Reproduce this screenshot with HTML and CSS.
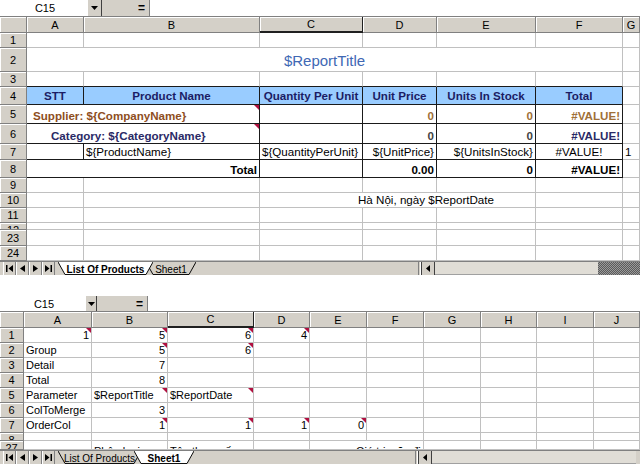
FILE: index.html
```html
<!DOCTYPE html>
<html lang="en">
<head>
    <meta charset="UTF-8">
    <title>Report Template</title>
    <link rel="stylesheet" href="styles.css">
</head>
<body>
<div class="screen">

    <!-- top window: List Of Products -->
    <section class="pane top">
        <div class="fbar">
            <div class="namebox">C15</div>
            <div class="dd"><svg width="7" height="4" viewBox="0 0 7 4"><path d="M0 0h7L3.5 4z" fill="#000"/></svg></div>
            <div class="eq">=</div>
            <div class="fx"></div>
        </div>

        <div class="row hdr">
            <div class="ch"></div><div class="ch">A</div><div class="ch">B</div><div class="ch sel">C</div><div class="ch">D</div><div class="ch">E</div><div class="ch">F</div><div class="ch">G</div>
        </div>
        <div class="row h15">
            <div class="rh">1</div><div class="c"></div><div class="c"></div><div class="c"></div><div class="c"></div><div class="c"></div><div class="c"></div><div class="c"></div>
        </div>
        <div class="row h24">
            <div class="rh">2</div><div class="c span6 title">$ReportTitle</div><div class="c"></div>
        </div>
        <div class="row h15">
            <div class="rh">3</div><div class="c bbot"></div><div class="c bbot"></div><div class="c bbot"></div><div class="c bbot"></div><div class="c bbot"></div><div class="c bbot"></div><div class="c"></div>
        </div>
        <div class="row h18">
            <div class="rh">4</div>
            <div class="c bx th">STT</div>
            <div class="c bx th">Product Name</div>
            <div class="c bx th">Quantity Per Unit</div>
            <div class="c bx th">Unit Price</div>
            <div class="c bx th">Units In Stock</div>
            <div class="c bx th">Total</div>
            <div class="c"></div>
        </div>
        <div class="row h19">
            <div class="rh">5</div>
            <div class="c bx span2 sup cm">Supplier: ${CompanyName}</div>
            <div class="c bx"></div>
            <div class="c bx r sup-num">0</div>
            <div class="c bx r sup-num">0</div>
            <div class="c bx r sup-num">#VALUE!</div>
            <div class="c"></div>
        </div>
        <div class="row h20">
            <div class="rh">6</div>
            <div class="c bx span2 cat cm">Category: ${CategoryName}</div>
            <div class="c bx"></div>
            <div class="c bx r cat-num">0</div>
            <div class="c bx r cat-num">0</div>
            <div class="c bx r cat">#VALUE!</div>
            <div class="c"></div>
        </div>
        <div class="row h16">
            <div class="rh">7</div>
            <div class="c bx"></div>
            <div class="c bx">${ProductName}</div>
            <div class="c bx">${QuantityPerUnit}</div>
            <div class="c bx r">${UnitPrice}</div>
            <div class="c bx r">${UnitsInStock}</div>
            <div class="c bx ctr">#VALUE!</div>
            <div class="c">1</div>
        </div>
        <div class="row h18">
            <div class="rh">8</div>
            <div class="c bx span2 r strong">Total</div>
            <div class="c bx"></div>
            <div class="c bx r strong">0.00</div>
            <div class="c bx r strong">0</div>
            <div class="c bx r strong">#VALUE!</div>
            <div class="c"></div>
        </div>
        <div class="row h15">
            <div class="rh">9</div><div class="c"></div><div class="c"></div><div class="c"></div><div class="c"></div><div class="c"></div><div class="c"></div><div class="c"></div>
        </div>
        <div class="row h15">
            <div class="rh">10</div><div class="c"></div><div class="c"></div><div class="c span3 place">Hà Nội, ngày $ReportDate</div><div class="c"></div><div class="c"></div>
        </div>
        <div class="row h15">
            <div class="rh">11</div><div class="c"></div><div class="c"></div><div class="c"></div><div class="c"></div><div class="c"></div><div class="c"></div><div class="c"></div>
        </div>
        <div class="row h7 cut">
            <div class="rh"><span class="clip">12</span></div><div class="c"></div><div class="c"></div><div class="c"></div><div class="c"></div><div class="c"></div><div class="c"></div><div class="c"></div>
        </div>
        <div class="row h16">
            <div class="rh">23</div><div class="c"></div><div class="c"></div><div class="c"></div><div class="c"></div><div class="c"></div><div class="c"></div><div class="c"></div>
        </div>
        <div class="row h15">
            <div class="rh">24</div><div class="c"></div><div class="c"></div><div class="c"></div><div class="c"></div><div class="c"></div><div class="c"></div><div class="c"></div>
        </div>

        <div class="tabbar">
            <div class="navs">
                <span class="nav"><svg width="7" height="7" viewBox="0 0 7 7"><path d="M0 0h1.5v7H0zM7 0v7L2.5 3.5z" fill="#000"/></svg></span>
                <span class="nav"><svg width="5" height="7" viewBox="0 0 5 7"><path d="M5 0v7L0 3.5z" fill="#000"/></svg></span>
                <span class="nav"><svg width="5" height="7" viewBox="0 0 5 7"><path d="M0 0v7l5-3.5z" fill="#000"/></svg></span>
                <span class="nav"><svg width="7" height="7" viewBox="0 0 7 7"><path d="M0 0v7l4.5-3.5zM5.5 0H7v7H5.5z" fill="#000"/></svg></span>
            </div>
            <div class="tabs">
                <div class="tab active w95">
                    <svg class="shape" viewBox="0 0 95 14" preserveAspectRatio="none"><path d="M0 0H95L88 13.5H7Z" fill="#fff"/><path d="M0 0L7 13.5H88L95 0" fill="none" stroke="#000"/></svg>
                    <span>List Of Products</span>
                </div>
                <div class="tab w50">
                    <svg class="shape" viewBox="0 0 50 14" preserveAspectRatio="none"><path d="M0 0H50L43 13.5H7Z" fill="#d4d0c8"/><path d="M0 0L7 13.5H43L50 0" fill="none" stroke="#000"/></svg>
                    <span>Sheet1</span>
                </div>
            </div>
            <div class="gap"></div>
            <div class="split"></div>
            <div class="sbtn"><svg width="4" height="7" viewBox="0 0 4 7"><path d="M4 0v7L0 3.5z" fill="#000"/></svg></div>
            <div class="track"></div>
            <div class="dither"></div>
        </div>
    </section>

    <!-- bottom window: Sheet1 -->
    <section class="pane bottom">
        <div class="fbar small">
            <div class="namebox">C15</div>
            <div class="dd"><svg width="7" height="4" viewBox="0 0 7 4"><path d="M0 0h7L3.5 4z" fill="#000"/></svg></div>
            <div class="eq">=</div>
            <div class="fx"></div>
        </div>

        <div class="row hdr">
            <div class="ch"></div><div class="ch">A</div><div class="ch">B</div><div class="ch sel">C</div><div class="ch">D</div><div class="ch">E</div><div class="ch">F</div><div class="ch">G</div><div class="ch">H</div><div class="ch">I</div><div class="ch">J</div>
        </div>
        <div class="row h15">
            <div class="rh">1</div><div class="c r cm">1</div><div class="c r cm">5</div><div class="c r cm">6</div><div class="c r cm">4</div><div class="c"></div><div class="c"></div><div class="c"></div><div class="c"></div><div class="c"></div><div class="c"></div>
        </div>
        <div class="row h15">
            <div class="rh">2</div><div class="c">Group</div><div class="c r cm">5</div><div class="c r cm">6</div><div class="c"></div><div class="c"></div><div class="c"></div><div class="c"></div><div class="c"></div><div class="c"></div><div class="c"></div>
        </div>
        <div class="row h15">
            <div class="rh">3</div><div class="c">Detail</div><div class="c r">7</div><div class="c"></div><div class="c"></div><div class="c"></div><div class="c"></div><div class="c"></div><div class="c"></div><div class="c"></div><div class="c"></div>
        </div>
        <div class="row h15">
            <div class="rh">4</div><div class="c">Total</div><div class="c r">8</div><div class="c"></div><div class="c"></div><div class="c"></div><div class="c"></div><div class="c"></div><div class="c"></div><div class="c"></div><div class="c"></div>
        </div>
        <div class="row h15">
            <div class="rh">5</div><div class="c">Parameter</div><div class="c cm">$ReportTitle</div><div class="c cm">$ReportDate</div><div class="c"></div><div class="c"></div><div class="c"></div><div class="c"></div><div class="c"></div><div class="c"></div><div class="c"></div>
        </div>
        <div class="row h15">
            <div class="rh">6</div><div class="c">ColToMerge</div><div class="c r">3</div><div class="c"></div><div class="c"></div><div class="c"></div><div class="c"></div><div class="c"></div><div class="c"></div><div class="c"></div><div class="c"></div>
        </div>
        <div class="row h15">
            <div class="rh">7</div><div class="c">OrderCol</div><div class="c r cm">1</div><div class="c r cm">1</div><div class="c r cm">1</div><div class="c r cm">0</div><div class="c"></div><div class="c"></div><div class="c"></div><div class="c"></div><div class="c"></div>
        </div>
        <div class="row h8 cut">
            <div class="rh"><span class="clip">8</span></div><div class="c"></div><div class="c"></div><div class="c"></div><div class="c"></div><div class="c"></div><div class="c"></div><div class="c"></div><div class="c"></div><div class="c"></div><div class="c"></div>
        </div>
        <div class="row h9 cut peek">
            <div class="rh"><span class="clip">27</span></div><div class="c"></div><div class="c">Phân loại</div><div class="c">Tên tham số</div><div class="c"></div><div class="c span2 far">Giá trị mặc định</div><div class="c"></div><div class="c"></div><div class="c"></div><div class="c"></div>
        </div>

        <div class="tabbar">
            <div class="navs">
                <span class="nav"><svg width="7" height="7" viewBox="0 0 7 7"><path d="M0 0h1.5v7H0zM7 0v7L2.5 3.5z" fill="#000"/></svg></span>
                <span class="nav"><svg width="5" height="7" viewBox="0 0 5 7"><path d="M5 0v7L0 3.5z" fill="#000"/></svg></span>
                <span class="nav"><svg width="5" height="7" viewBox="0 0 5 7"><path d="M0 0v7l5-3.5z" fill="#000"/></svg></span>
                <span class="nav"><svg width="7" height="7" viewBox="0 0 7 7"><path d="M0 0v7l4.5-3.5zM5.5 0H7v7H5.5z" fill="#000"/></svg></span>
            </div>
            <div class="tabs">
                <div class="tab w83">
                    <svg class="shape" viewBox="0 0 83 14" preserveAspectRatio="none"><path d="M0 0H83L76 13.5H7Z" fill="#d4d0c8"/><path d="M0 0L7 13.5H76L83 0" fill="none" stroke="#000"/></svg>
                    <span>List Of Products</span>
                </div>
                <div class="tab active w60">
                    <svg class="shape" viewBox="0 0 60 14" preserveAspectRatio="none"><path d="M0 0H60L53 13.5H7Z" fill="#fff"/><path d="M0 0L7 13.5H53L60 0" fill="none" stroke="#000"/></svg>
                    <span>Sheet1</span>
                </div>
            </div>
            <div class="gap"></div>
            <div class="split"></div>
            <div class="sbtn"><svg width="4" height="7" viewBox="0 0 4 7"><path d="M4 0v7L0 3.5z" fill="#000"/></svg></div>
            <div class="track"></div>
            <div class="end"></div>
        </div>
    </section>

</div>
</body>
</html>
```

FILE: styles.css
```css
body {
    margin: 0;
    background: #fff;
    font-family: "Liberation Sans", Arial, sans-serif;
    color: #000;
    overflow: hidden;
}

.screen {
    width: 640px;
    height: 464px;
    overflow: hidden;
}

.pane {
    display: flex;
    flex-direction: column;
}

.bottom {
    margin-top: 21px;
}

/* formula bar */
.fbar {
    display: flex;
    height: 16px;
    border-bottom: 1px solid #808080;
    font-size: 11px;
}

.fbar.small {
    height: 15px;
}

.namebox {
    width: 87px;
    display: flex;
    align-items: center;
    justify-content: center;
    padding-left: 3px;
    box-sizing: border-box;
    background: #fff;
}

.dd {
    width: 13px;
    display: flex;
    align-items: center;
    justify-content: center;
    background: #d4d0c8;
    border-left: 1px solid #fff;
    border-right: 1px solid #404040;
}

.eq {
    width: 48px;
    display: flex;
    align-items: center;
    justify-content: flex-end;
    padding-right: 4px;
    box-sizing: border-box;
    background: #d4d0c8;
    font-weight: bold;
    font-size: 12px;
    border-right: 1px solid #808080;
}

.fx {
    flex: 1;
    background: #fff;
}

.small .namebox {
    width: 85px;
}

.small .dd {
    width: 10px;
}

.small .eq {
    width: 51px;
}

/* grid rows */
.row {
    display: grid;
    box-sizing: border-box;
    overflow: hidden;
}

.top .row {
    grid-template-columns: 27px 57px 176px 103px 74px 99px 87px 17px;
    font-size: 11.6px;
}

.bottom .row {
    grid-template-columns: 24px 68px 76px 86px 56px 57px 57px 57px 56px 57px 46px;
    font-size: 11px;
}

.hdr { height: 16px; }
.h7 { height: 7px; }
.h8 { height: 8px; }
.h9 { height: 9px; }
.h15 { height: 15px; }
.h16 { height: 16px; }
.h18 { height: 18px; }
.h19 { height: 19px; }
.h20 { height: 20px; }
.h24 { height: 24px; }

.ch,
.rh {
    background: #d4d0c8;
    border-right: 1px solid #808080;
    border-bottom: 1px solid #808080;
    box-shadow: inset 1px 1px 0 #fff;
    display: flex;
    align-items: center;
    justify-content: center;
    font-size: 11px;
    box-sizing: border-box;
    overflow: hidden;
}

.ch.sel {
    border-right-color: #202020;
    border-bottom: 2px solid #202020;
}

/* rows that are only partly visible at a pane split */
.cut .rh {
    align-items: flex-start;
}

.clip {
    display: block;
    height: 100%;
    overflow: hidden;
    line-height: 12px;
    padding-top: 1px;
    box-sizing: border-box;
}

.c {
    position: relative;
    border-right: 1px solid #c0c0c0;
    border-bottom: 1px solid #c0c0c0;
    box-sizing: border-box;
    display: flex;
    align-items: flex-end;
    padding: 0 2px 1px;
    white-space: nowrap;
    overflow: hidden;
    min-width: 0;
}

.peek .c {
    align-items: flex-start;
    line-height: 12px;
    padding-top: 4px;
}

.peek .far {
    padding-left: 46px;
}

.r { justify-content: flex-end; }
.ctr { justify-content: center; }

.span2 { grid-column: span 2; }
.span3 { grid-column: span 3; }
.span6 { grid-column: span 6; }

/* report table borders */
.bx {
    border-right-color: #1a1a1a;
    border-bottom-color: #1a1a1a;
}

.bbot {
    border-bottom-color: #1a1a1a;
}

.th {
    background: #99ccff;
    font-weight: bold;
    color: #1c1c64;
    justify-content: center;
    align-items: center;
}

.title {
    justify-content: center;
    font-size: 15px;
    color: #4068b4;
    padding-bottom: 2px;
}

.sup {
    font-weight: bold;
    color: #8e4e1e;
    padding-left: 6px;
}

.sup-num {
    font-weight: bold;
    color: #a07038;
}

.cat {
    font-weight: bold;
    color: #2a2a66;
}

.span2.cat {
    padding-left: 24px;
}

.cat-num {
    font-weight: bold;
    color: #444;
}

.strong {
    font-weight: bold;
}

.place {
    padding-left: 98px;
}

/* comment marker */
.cm::after {
    content: "";
    position: absolute;
    top: 0;
    right: 0;
    border-top: 5px solid #b01040;
    border-left: 5px solid transparent;
}

/* sheet tabs */
.tabbar {
    display: flex;
    height: 14px;
    background: #d4d0c8;
    border-top: 1px solid #808080;
    box-sizing: border-box;
    font-size: 10px;
}

.navs {
    display: flex;
    padding-left: 3px;
    width: 58px;
    box-sizing: border-box;
}

.nav {
    width: 13px;
    display: flex;
    align-items: center;
    justify-content: center;
    border-right: 1px solid #808080;
    border-left: 1px solid #fff;
    box-sizing: border-box;
}

.tabs {
    display: flex;
}

.tab {
    position: relative;
    display: flex;
    align-items: center;
    justify-content: center;
    height: 13px;
}

.tab + .tab {
    margin-left: -7px;
}

.tab span {
    position: relative;
    padding-top: 1px;
}

.tab.active {
    z-index: 1;
    font-weight: bold;
}

.shape {
    position: absolute;
    left: 0;
    top: 0;
    width: 100%;
    height: 100%;
}

.w95 { width: 95px; }
.w50 { width: 50px; }
.w83 { width: 83px; }
.w60 { width: 60px; }

.gap {
    flex: 1;
}

.split {
    width: 3px;
    border-left: 1px solid #808080;
    border-right: 1px solid #fff;
    box-sizing: border-box;
}

.sbtn {
    width: 12px;
    display: flex;
    align-items: center;
    justify-content: center;
    border-left: 1px solid #404040;
    border-right: 1px solid #404040;
    background: #d4d0c8;
}

.track {
    background: #e0ddd6;
    border-bottom: 1px solid #a0a0a0;
}

.top .track {
    width: 163px;
}

.bottom .track {
    width: 204px;
}

.dither {
    width: 42px;
    background: repeating-conic-gradient(#5a5a5a 0 25%, #9a9a9a 0 50%) 0 0 / 2px 2px;
}

.end {
    width: 4px;
}
```
